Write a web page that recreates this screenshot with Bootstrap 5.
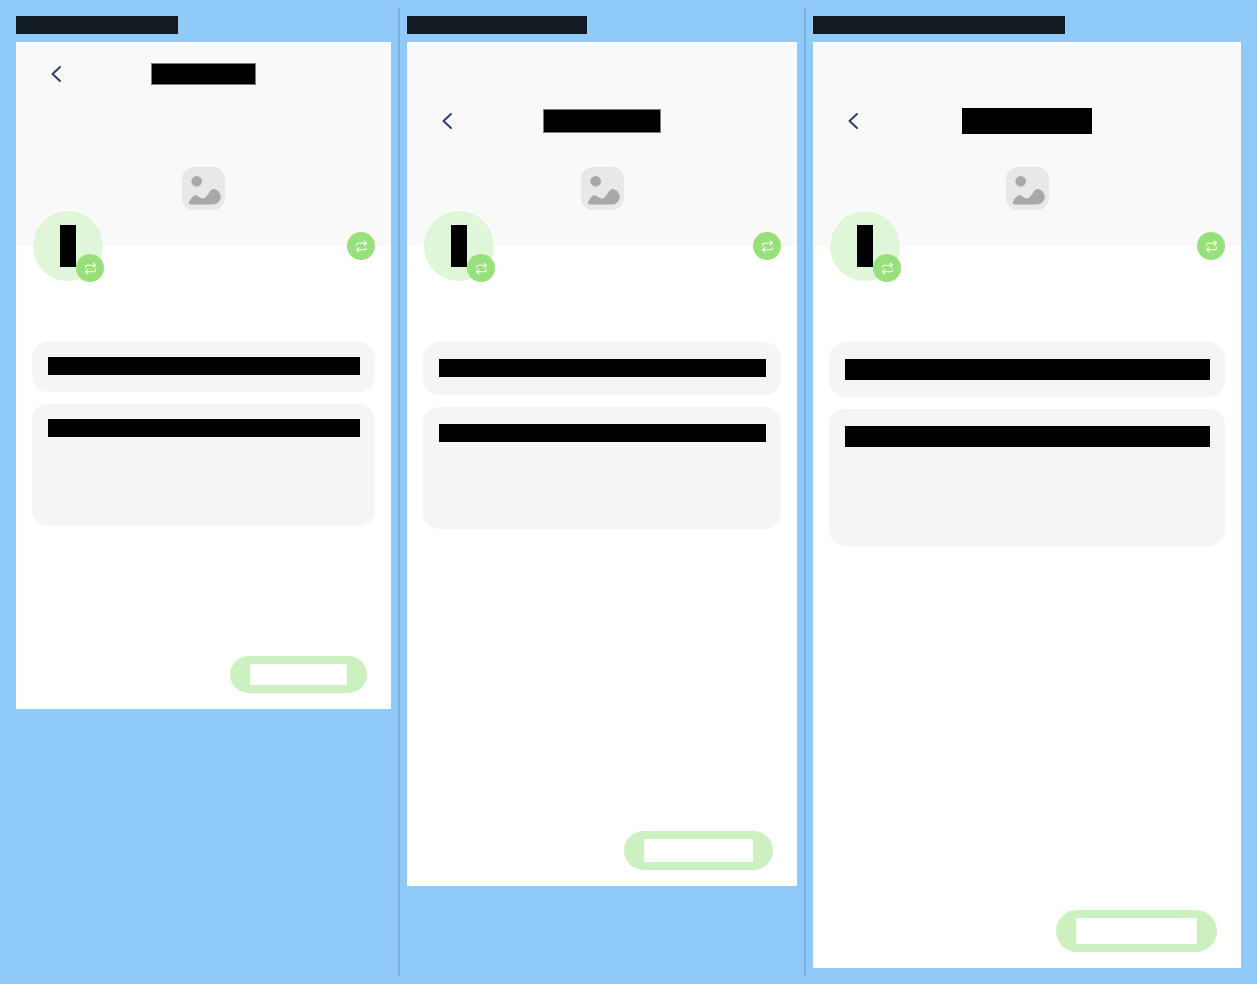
<!DOCTYPE html>
<html lang="en">

<head>
    <meta charset="UTF-8">
    <meta name="viewport" content="width=device-width, initial-scale=1.0">
    <link href="https://cdn.jsdelivr.net/npm/bootstrap@5.3.0/dist/css/bootstrap.min.css" rel="stylesheet">
    <title>Profile screens</title>
    <style>
        body {
            background-color: #90caf9;
            font-family: "Liberation Sans", sans-serif;
        }

        .board {
            padding-top: 8px;
            height: 976px;
        }

        .board-col {
            padding-top: 8px;
            padding-left: 7px;
            border-right: 2px solid #7eb2de;
        }

        .board-col:first-child {
            width: 400px;
            padding-left: 16px;
        }

        .board-col:nth-child(2) {
            width: 406px;
        }

        .board-col:last-child {
            border-right: 0;
        }

        .col-label {
            height: 18px;
            margin-bottom: 8px;
            background-color: #121a22;
        }

        .screen {
            width: var(--w);
            height: var(--h);
        }

        .screen-sm {
            --w: 375px;
            --h: 667px;
            --top: 0px;
            --title-w: 105px;
            --title-h: 22px;
            --title-edge: #7d7d7d;
            --first-h: 50px;
            --second-h: 122px;
            --card-pad: 15px;
            --bar-h: 18px;
            --btn-w: 97px;
            --btn-h: 21px;
        }

        .screen-md {
            --w: 390px;
            --h: 844px;
            --top: 47px;
            --title-w: 118px;
            --title-h: 24px;
            --title-edge: #7d7d7d;
            --first-h: 53px;
            --second-h: 122px;
            --card-pad: 17px;
            --bar-h: 18px;
            --btn-w: 109px;
            --btn-h: 23px;
        }

        .screen-lg {
            --w: 428px;
            --h: 926px;
            --top: 47px;
            --title-w: 130px;
            --title-h: 26px;
            --title-edge: #000;
            --first-h: 55px;
            --second-h: 137px;
            --card-pad: 17px;
            --bar-h: 21px;
            --btn-w: 121px;
            --btn-h: 26px;
        }

        .hero {
            height: 204px;
            padding-top: 125px;
            background-color: #f9f9f9;
        }

        .hero-nav {
            top: var(--top);
            height: 64px;
            padding: 0 35px;
            display: grid;
            grid-template-columns: 1fr auto 1fr;
        }

        .back-arrow {
            width: 12px;
            height: 18px;
            margin-left: -1px;
            stroke: #2a3f75;
        }

        .nav-title {
            width: var(--title-w);
            height: var(--title-h);
            border: 1px solid var(--title-edge);
        }

        .picture-icon {
            width: 43px;
            height: 43px;
        }

        .avatar-wrap {
            left: 16px;
            top: 168px;
            width: 72px;
            height: 72px;
            background-color: #dff6d8;
            border: 1px solid #fff;
        }

        .avatar-letter {
            width: 16px;
            height: 42px;
        }

        .swap-badge {
            width: 28px;
            height: 28px;
            background-color: #98e07c;
        }

        .swap-badge svg {
            width: 13px;
            height: 13px;
        }

        .avatar-badge {
            left: 43px;
            top: 43px;
        }

        .hero-badge {
            right: 16px;
            top: 190px;
        }

        .screen-body {
            padding: 96px 16px 16px;
            gap: 12px;
        }

        .info-box {
            padding: var(--card-pad) 15px 0 16px;
            background-color: #f5f5f5;
            border-radius: 16px;
        }

        .info-first {
            height: var(--first-h);
        }

        .info-second {
            height: var(--second-h);
        }

        .info-line {
            height: var(--bar-h);
        }

        .save-btn {
            margin-right: 8px;
            padding: 8px 20px;
            background-color: #cdf0c0;
            border: 0;
            border-radius: 50rem;
        }

        .save-label {
            width: var(--btn-w);
            height: var(--btn-h);
        }
    </style>
</head>

<body class="m-0">

    <svg class="d-none">
        <symbol id="swap" viewBox="0 0 24 24" fill="none" stroke="#fff" stroke-width="2" stroke-linecap="round" stroke-linejoin="round">
            <path d="M17 2l4 4-4 4M3 11V9a3 3 0 0 1 3-3h15M7 22l-4-4 4-4M21 13v2a3 3 0 0 1-3 3H3" />
        </symbol>
        <symbol id="back" viewBox="0 0 12 18" fill="none" stroke-width="2" stroke-linecap="round" stroke-linejoin="round">
            <path d="M10 2L2.5 9l7.5 7" />
        </symbol>
        <symbol id="picture" viewBox="0 0 43 43">
            <rect width="43" height="43" rx="12" fill="#e8e8e8" />
            <circle cx="14.7" cy="14.3" r="5.3" fill="#a8a8a8" />
            <path fill="#a8a8a8" d="M7 35C9 31.5 11 28.5 13 28.2 15.5 28 18 31.5 21.5 31.5 25 31.5 27.5 22 31.5 22 35 22 38.7 26 38.7 29.5 38.7 34 35 37.5 31 37.5H9C7 37.5 6.3 36 7 35Z" />
        </symbol>
    </svg>

    <div class="board d-flex">
        <div class="board-col">
            <div class="col-label" style="width: 162px"></div>
            <div class="screen screen-sm bg-white d-flex flex-column position-relative"></div>
        </div>
        <div class="board-col">
            <div class="col-label" style="width: 180px"></div>
            <div class="screen screen-md bg-white d-flex flex-column position-relative"></div>
        </div>
        <div class="board-col flex-grow-1">
            <div class="col-label" style="width: 252px"></div>
            <div class="screen screen-lg bg-white d-flex flex-column position-relative"></div>
        </div>
    </div>

    <script>
        const conteudo = `
            <div class="hero d-flex justify-content-center">
                <svg class="picture-icon"><use href="#picture" /></svg>
            </div>
            <div class="hero-nav position-absolute w-100 align-items-center">
                <svg class="back-arrow"><use href="#back" /></svg>
                <div class="nav-title bg-black"></div>
            </div>
            <div class="avatar-wrap position-absolute rounded-circle d-flex align-items-center justify-content-center">
                <div class="avatar-letter bg-black"></div>
                <div class="swap-badge avatar-badge position-absolute rounded-circle d-flex align-items-center justify-content-center">
                    <svg><use href="#swap" /></svg>
                </div>
            </div>
            <div class="swap-badge hero-badge position-absolute rounded-circle d-flex align-items-center justify-content-center">
                <svg><use href="#swap" /></svg>
            </div>
            <div class="screen-body d-flex flex-column flex-grow-1">
                <div class="info-box info-first"><div class="info-line bg-black"></div></div>
                <div class="info-box info-second"><div class="info-line bg-black"></div></div>
                <button type="button" class="save-btn btn mt-auto align-self-end">
                    <div class="save-label bg-white"></div>
                </button>
            </div>`;

        document.querySelectorAll('.screen').forEach(tela => {
            tela.innerHTML = conteudo;
        });
    </script>

</body>

</html>
